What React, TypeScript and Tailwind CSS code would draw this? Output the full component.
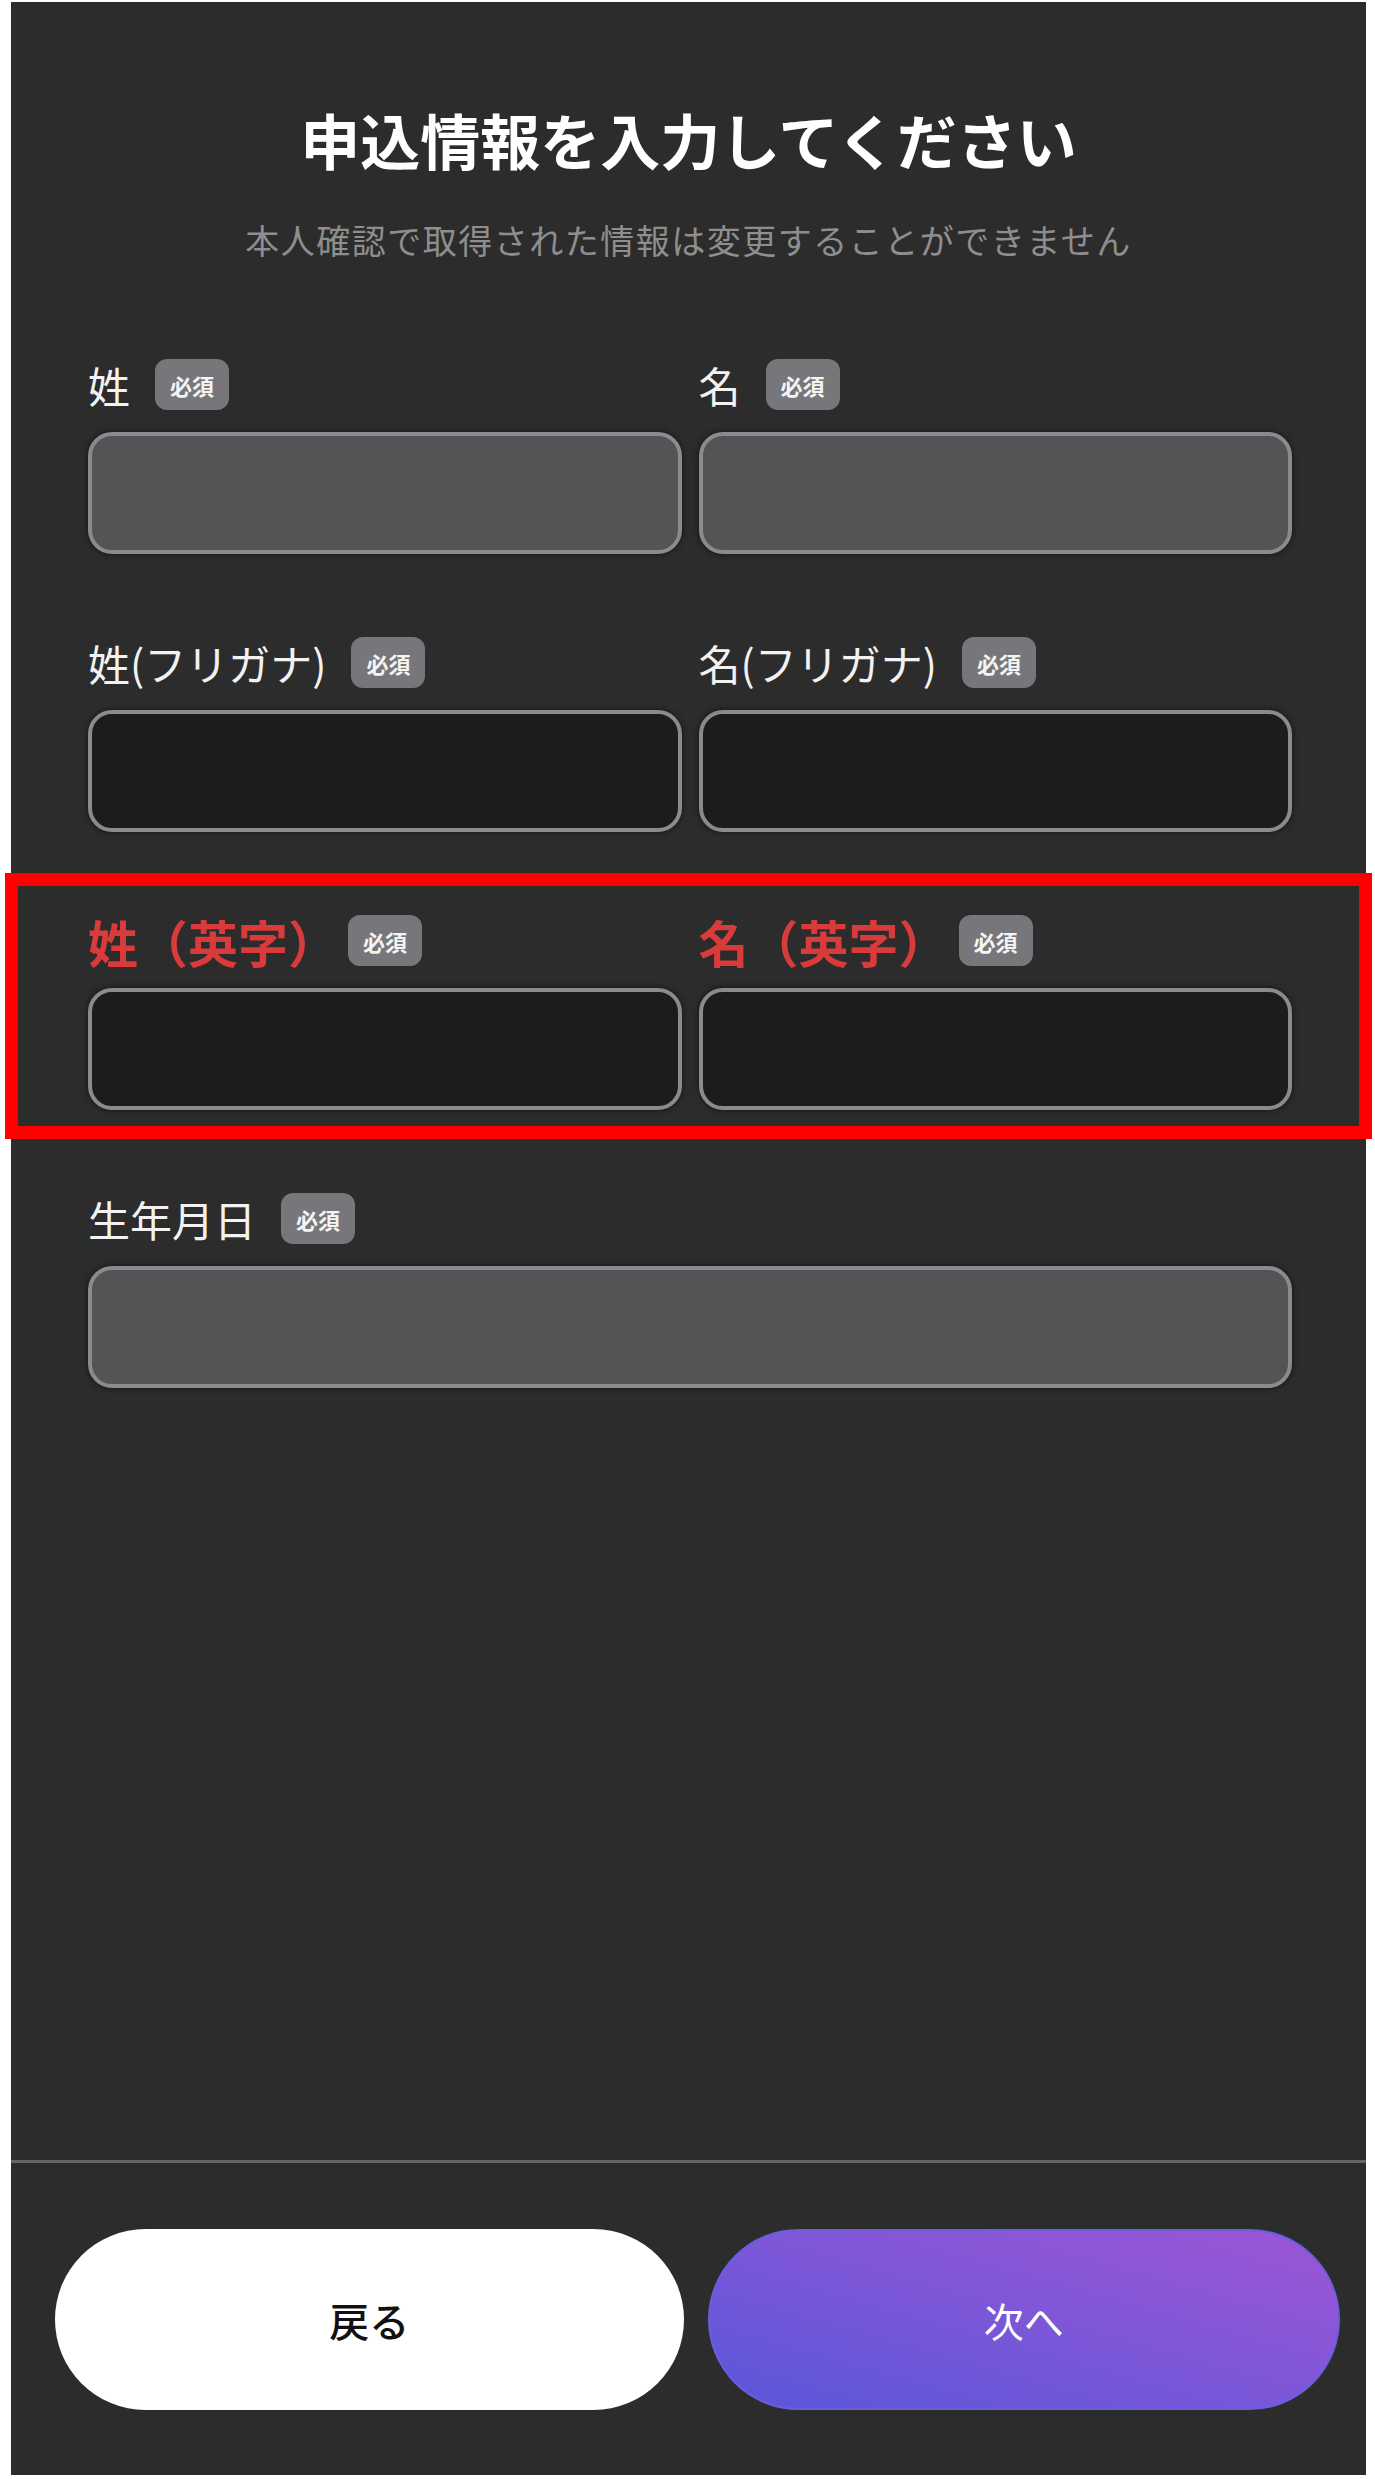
const font = { fontFamily: '"Noto Sans CJK JP", "Noto Sans", sans-serif' };

interface FieldProps {
	label: string;
	dark?: boolean;
	highlight?: boolean;
}

const Badge = () => (
	<span className="flex h-[51px] w-[74px] shrink-0 items-center justify-center rounded-[12px] bg-[#77777b] text-[22px] font-bold leading-none text-[#f4f4f4]">
		必須
	</span>
);

const Field = ({ label, dark, highlight }: FieldProps) => (
	<div className="flex flex-col">
		<div className="flex h-[51px] items-center">
			{highlight ? (
				<span className="mr-[10px] text-[50px] font-bold leading-none text-[#d93b3b]">
					{label}
				</span>
			) : (
				<span className="mr-[25px] text-[42px] leading-none text-[#f2f2f2]">
					{label}
				</span>
			)}
			<Badge />
		</div>
		<div
			className={`mt-[22px] h-[122px] rounded-[24px] border-[4px] border-[#8b8b8f] shadow-[0_0_6px_rgba(0,0,0,0.6)] ${
				dark ? "bg-[#1c1c1c]" : "bg-[#545456]"
			}`}
		/>
	</div>
);

export default function App() {
	return (
		<div className="bg-white pt-[2px] pl-[11px] pr-[9px] pb-[4px]" style={font}>
			<div className="flex h-[2473px] flex-col bg-[#2c2c2c]">
				<div className="flex flex-col items-center pt-[107px]">
					<h1 className="text-[60px] font-bold leading-none text-white">
						申込情報を入力してください
					</h1>
					<p className="mt-[54px] text-[34px] leading-none tracking-[1.5px] text-[#8e8e8e]">
						本人確認で取得された情報は変更することができません
					</p>
				</div>

				<div className="mt-[102px] flex flex-col gap-[83px] pl-[77px] pr-[74px]">
					<div className="grid grid-cols-2 gap-x-[17px]">
						<Field label="姓" />
						<Field label="名" />
					</div>
					<div className="grid grid-cols-2 gap-x-[17px]">
						<Field label="姓(フリガナ)" dark />
						<Field label="名(フリガナ)" dark />
					</div>
					<div className="relative grid grid-cols-2 gap-x-[17px]">
						<Field label="姓（英字）" dark highlight />
						<Field label="名（英字）" dark highlight />
						<div className="pointer-events-none absolute -top-[42px] -left-[83px] -right-[80px] -bottom-[29px] border-[13px] border-[#ff0000]" />
					</div>
					<Field label="生年月日" />
				</div>

				<div className="flex-1" />

				<div className="border-t-[3px] border-[#646464] pt-[66px] pb-[65px] pl-[44px] pr-[26px]">
					<div className="flex gap-[24px]">
						<button className="flex h-[181px] flex-1 items-center justify-center rounded-full bg-white text-[40px] font-medium text-[#111111]">
							戻る
						</button>
						<button className="flex h-[181px] flex-1 items-center justify-center rounded-full border-[2px] border-[#6a5ee0] bg-linear-to-tr from-[#5856d8] to-[#9d55d7] text-[40px] text-white">
							次へ
						</button>
					</div>
				</div>
			</div>
		</div>
	);
}
